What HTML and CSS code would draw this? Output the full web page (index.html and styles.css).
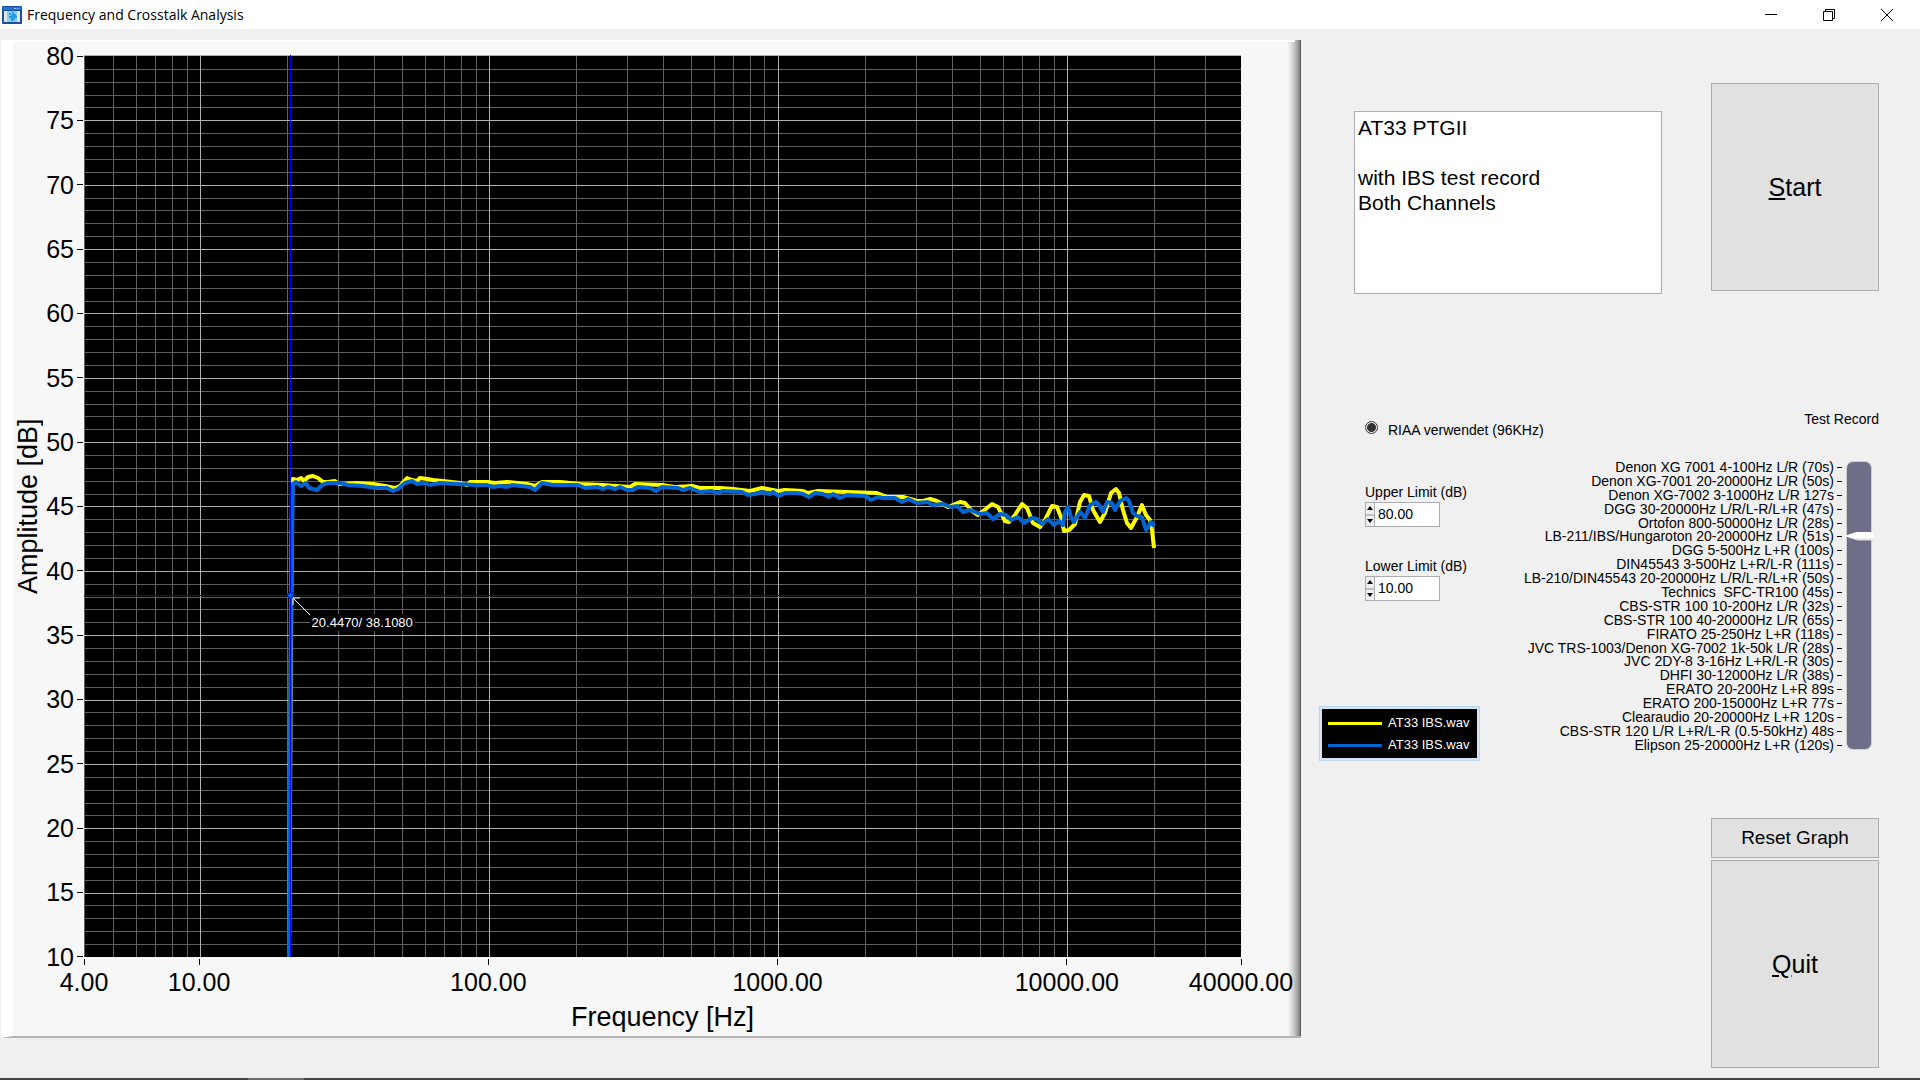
FILE: index.html
```html
<!DOCTYPE html>
<html lang="en">
<head>
<meta charset="utf-8">
<title>Frequency and Crosstalk Analysis</title>
<link rel="stylesheet" href="styles.css">
</head>
<body>
<header class="titlebar">
  <svg class="app-icon" viewBox="0 0 20 18" aria-hidden="true">
    <rect x="0" y="0" width="20" height="18" rx="1" fill="#1c4fa0"/>
    <rect x="1" y="1" width="18" height="3" fill="#2a6fd0"/>
    <rect x="12" y="2" width="2" height="1" fill="#9cc4f0"/>
    <rect x="15" y="2" width="1" height="1" fill="#9cc4f0"/>
    <rect x="17" y="2" width="1" height="1" fill="#e08060"/>
    <rect x="2" y="5" width="16" height="11" fill="#e4e4da"/>
    <rect x="5" y="5" width="10" height="11" fill="#7fd0f5"/>
    <path d="M7 7h2v2H7zM10 6h2v2h2v2h1v2h-2v2h-2v1H9v-3H7v-2h2V9h1z" fill="#2a9be0"/>
  </svg>
  <h1 class="title">Frequency and Crosstalk Analysis</h1>
  <div class="window-buttons">
    <button class="window-button" aria-label="Minimize"><svg width="12" height="12" viewBox="0 0 12 12"><path d="M0 5.5h12"/></svg></button>
    <button class="window-button" aria-label="Restore"><svg width="12" height="12" viewBox="0 0 12 12"><path d="M.5 2.5h9v9h-9zM2.500 2.500v-2h9v9h-2"/></svg></button>
    <button class="window-button" aria-label="Close"><svg width="12" height="12" viewBox="0 0 12 12"><path d="M0 0l12 12M12 0L0 12"/></svg></button>
  </div>
</header>

<main class="workspace">
  <section class="graph">
    <div class="y-title">Amplitude [dB]</div>
    <ol class="y-axis">
      <li>80</li><li>75</li><li>70</li><li>65</li><li>60</li><li>55</li><li>50</li><li>45</li><li>40</li><li>35</li><li>30</li><li>25</li><li>20</li><li>15</li><li>10</li>
    </ol>
    <div class="plot">
      <svg class="plot-area" viewBox="84 55 1157 902" preserveAspectRatio="none" role="img" aria-label="Amplitude over frequency">
        <path class="grid-minor" d="M84 69H1241M84 82H1241M84 95H1241M84 107H1241M84 133H1241M84 146H1241M84 159H1241M84 172H1241M84 198H1241M84 210H1241M84 223H1241M84 236H1241M84 262H1241M84 275H1241M84 288H1241M84 301H1241M84 326H1241M84 339H1241M84 352H1241M84 365H1241M84 391H1241M84 404H1241M84 416H1241M84 429H1241M84 455H1241M84 468H1241M84 481H1241M84 494H1241M84 519H1241M84 532H1241M84 545H1241M84 558H1241M84 584H1241M84 597H1241M84 609H1241M84 622H1241M84 648H1241M84 661H1241M84 674H1241M84 687H1241M84 712H1241M84 725H1241M84 738H1241M84 751H1241M84 777H1241M84 790H1241M84 803H1241M84 815H1241M84 841H1241M84 854H1241M84 867H1241M84 880H1241M84 905H1241M84 918H1241M84 931H1241M84 944H1241"/>
        <path class="grid-minor" d="M84 55V957M113 55V957M136 55V957M155 55V957M172 55V957M187 55V957M287 55V957M338 55V957M374 55V957M402 55V957M425 55V957M444 55V957M461 55V957M476 55V957M576 55V957M627 55V957M663 55V957M691 55V957M714 55V957M733 55V957M750 55V957M764 55V957M865 55V957M916 55V957M952 55V957M980 55V957M1003 55V957M1022 55V957M1039 55V957M1054 55V957M1154 55V957M1205 55V957"/>
        <path class="grid-major" d="M84 55H1241M84 120H1241M84 185H1241M84 249H1241M84 313H1241M84 378H1241M84 442H1241M84 506H1241M84 571H1241M84 635H1241M84 700H1241M84 764H1241M84 828H1241M84 893H1241M200 55V957M489 55V957M778 55V957M1067 55V957"/>
        <polyline class="trace trace-a" points="289,957 292,482 293,479 297,480 301,478 304,481 308,477 313,476 318,478 323,482 328,482 335,481 339,484 357,483 373,484 385,486 395,488 400,486 407,478 412,480 417,481 420,478 427,479 433,480 443,481 460,483 467,485 470,482 488,482 495,483 507,482 527,484 535,486 542,482 560,482 580,484 603,485 630,487 635,484 662,485 675,487 692,486 700,488 720,488 733,489 750,491 762,488 778,491 785,490 803,491 808,493 818,491 847,492 877,493 887,497 903,497 917,501 923,501 930,499 937,501 948,507 960,502 965,503 972,511 978,515 987,508 992,504 998,507 1005,521 1009,522 1015,515 1022,504 1027,508 1033,523 1040,527 1045,520 1052,506 1057,507 1061,517 1064,531 1069,530 1075,524 1080,502 1084,495 1089,496 1093,510 1100,522 1105,513 1111,493 1116,489 1119,493 1123,510 1127,523 1131,528 1137,517 1142,505 1146,515 1150,520 1152,530 1154,548"/>
        <polyline class="trace trace-b" points="289,957 291,596 293,484 296,482 301,486 306,483 309,488 317,490 322,485 328,483 340,483 348,485 363,486 377,488 387,488 393,491 398,489 405,483 412,481 417,484 425,483 430,485 440,483 457,484 477,485 487,485 492,487 500,486 507,487 512,485 530,487 535,490 542,483 553,485 578,485 585,488 597,487 603,489 608,487 615,489 620,487 627,490 633,490 638,487 650,488 656,491 662,487 678,488 683,490 690,488 700,492 712,491 717,493 723,491 742,492 748,495 755,494 762,492 770,494 773,492 779,496 785,493 797,493 803,494 809,497 815,493 823,494 829,497 833,494 840,498 847,495 865,496 871,500 878,497 883,498 895,498 902,502 908,499 917,503 928,502 932,505 943,504 951,507 957,506 963,512 970,510 980,514 987,513 993,519 1000,514 1006,515 1011,520 1018,517 1024,523 1032,518 1037,519 1042,524 1048,519 1054,525 1059,521 1063,525 1065,512 1068,507 1071,517 1074,522 1080,512 1085,518 1090,505 1096,502 1099,505 1103,512 1107,502 1112,503 1115,510 1120,501 1126,498 1129,501 1133,513 1137,516 1142,517 1146,530 1151,522 1154,526"/>
        <path class="cursor-line" d="M290 55V957M84 595H1241"/>
        <circle class="cursor-point" cx="290.500" cy="595.500" r="3"/>
        <path class="cursor-arrow" d="M310 615L293 598M293 605V598H300"/>
      </svg>
      <output class="cursor-label">20.4470/ 38.1080</output>
    </div>
    <div class="x-side">
      <ol class="x-axis">
        <li>4.00</li><li>10.00</li><li>100.00</li><li>1000.00</li><li>10000.00</li><li>40000.00</li>
      </ol>
      <div class="x-title">Frequency [Hz]</div>
    </div>
  </section>

  <section class="controls">
    <div class="top-row">
      <textarea class="notes" aria-label="Notes" spellcheck="false">AT33 PTGII

with IBS test record
Both Channels</textarea>
      <button class="push tall"><span><u>S</u>tart</span></button>
    </div>

    <div class="middle-row">
      <div class="settings">
        <label class="riaa"><input type="radio" checked>RIAA verwendet (96KHz)</label>
        <div class="field">
          <label for="upper">Upper Limit (dB)</label>
          <div class="spin-box">
            <div class="spinner">
              <button class="step up" aria-label="Raise upper limit"></button>
              <button class="step down" aria-label="Reduce upper limit"></button>
            </div>
            <input id="upper" type="text" value="80.00">
          </div>
        </div>
        <div class="field">
          <label for="lower">Lower Limit (dB)</label>
          <div class="spin-box">
            <div class="spinner">
              <button class="step up" aria-label="Raise lower limit"></button>
              <button class="step down" aria-label="Reduce lower limit"></button>
            </div>
            <input id="lower" type="text" value="10.00">
          </div>
        </div>
        <ul class="legend">
          <li class="series-a">AT33 IBS.wav</li>
          <li class="series-b">AT33 IBS.wav</li>
        </ul>
      </div>

      <div class="record">
        <label class="record-title" for="record">Test Record</label>
        <div class="record-body">
          <ol class="record-list">
            <li>Denon XG 7001 4-100Hz L/R (70s)</li>
            <li>Denon XG-7001 20-20000Hz L/R (50s)</li>
            <li>Denon XG-7002 3-1000Hz L/R 127s</li>
            <li>DGG 30-20000Hz L/R/L-R/L+R (47s)</li>
            <li>Ortofon 800-50000Hz L/R (28s)</li>
            <li>LB-211/IBS/Hungaroton 20-20000Hz L/R (51s)</li>
            <li>DGG 5-500Hz L+R (100s)</li>
            <li>DIN45543 3-500Hz L+R/L-R (111s)</li>
            <li>LB-210/DIN45543 20-20000Hz L/R/L-R/L+R (50s)</li>
            <li>Technics&nbsp; SFC-TR100 (45s)</li>
            <li>CBS-STR 100 10-200Hz L/R (32s)</li>
            <li>CBS-STR 100 40-20000Hz L/R (65s)</li>
            <li>FIRATO 25-250Hz L+R (118s)</li>
            <li>JVC TRS-1003/Denon XG-7002 1k-50k L/R (28s)</li>
            <li>JVC 2DY-8 3-16Hz L+R/L-R (30s)</li>
            <li>DHFI 30-12000Hz L/R (38s)</li>
            <li>ERATO 20-200Hz L+R 89s</li>
            <li>ERATO 200-15000Hz L+R 77s</li>
            <li>Clearaudio 20-20000Hz L+R 120s</li>
            <li>CBS-STR 120 L/R L+R/L-R (0.5-50kHz) 48s</li>
            <li>Elipson 25-20000Hz L+R (120s)</li>
          </ol>
          <input class="record-slider" id="record" type="range" min="0" max="20" value="5">
        </div>
      </div>
    </div>

    <div class="bottom-row">
      <button class="push short">Reset Graph</button>
      <button class="push tall"><span><u>Q</u>uit</span></button>
    </div>
  </section>
</main>
<footer class="taskbar-edge"></footer>
</body>
</html>
```
FILE: styles.css
```css
* { box-sizing: border-box; }

body {
  margin: 0;
  min-height: 100vh;
  display: grid;
  grid-template-rows: 29px 1fr 2px;
  background: #f0f0f0;
  color: #000;
  font: 14px/17px "Liberation Sans", Arial, sans-serif;
}

ol, ul { margin: 0; padding: 0; list-style: none; }
button, input, textarea { font: inherit; color: inherit; margin: 0; border-radius: 0; }

/* Title bar */
.titlebar { display: flex; align-items: center; background: #fff; padding: 0 4px 0 2px; }
.app-icon { width: 20px; height: 18px; }
.title { margin: 0 auto 0 5px; font: 14px/20px "Open Sans", "Noto Sans", sans-serif; }
.window-buttons { display: flex; height: 100%; }
.window-button {
  width: 58px;
  padding: 0;
  border: 0;
  background: none;
  display: grid;
  place-items: center;
}
.window-button svg { fill: none; stroke: #000; }

/* Main split */
.workspace { display: grid; grid-template-columns: minmax(0, 1fr) 619px; }

/* Graph panel */
.graph {
  margin: 11px 0 40px 1px;
  padding: 15px 60px 0 0;
  border: solid #fff;
  border-width: 0 0 2px 12px;
  border-bottom-color: #b4b4b4;
  background:
    linear-gradient(#fff, #fff) 0 0 / calc(100% - 6px) 2px no-repeat,
    linear-gradient(to left, #505050, #909090 2px, #c8c8c8 7px, #f7f7f7 13px);
  display: grid;
  grid-template: 1fr 79px / 32px 39px minmax(0, 1fr);
  font-size: 25px;
  line-height: 30px;
}
.y-title { writing-mode: vertical-rl; transform: rotate(180deg); text-align: center; font-size: 27px; }
.y-axis {
  margin: -14px 0 -15px;
  display: flex;
  flex-direction: column;
  justify-content: space-between;
}
.y-axis li { display: flex; align-items: center; justify-content: flex-end; gap: 3px; }
.y-axis li::after { content: ""; width: 6px; height: 1px; margin-right: 1px; background: #000; }

.plot { position: relative; background: #000; min-height: 0; }
.plot-area { position: absolute; width: 100%; height: 100%; }
.plot-area path, .plot-area polyline { fill: none; vector-effect: non-scaling-stroke; }
.grid-minor { stroke: #606060; shape-rendering: crispEdges; }
.grid-major { stroke: #b0b0b0; shape-rendering: crispEdges; }
.trace { stroke-width: 4px; stroke-linejoin: round; }
.trace-a { stroke: #ff0; }
.trace-b { stroke: #0064d2; }
.cursor-line { stroke: #00f; shape-rendering: crispEdges; }
.cursor-point { fill: #0064d2; stroke: #00f; }
.cursor-arrow { stroke: #fff; }
.cursor-label {
  position: absolute;
  left: 19.5%;
  top: 62%;
  padding: 0 2px;
  background: #000;
  color: #fff;
  font-size: 13px;
  line-height: 17px;
}

.x-side { grid-column: 3; padding-top: 2px; }
.x-axis { display: grid; grid-template-columns: 115fr 289fr 289fr 289fr 174fr 0; }
.x-axis li { width: 0; display: flex; flex-direction: column; align-items: center; }
.x-axis li::before { content: ""; flex: none; width: 1px; height: 6px; margin-bottom: 2px; background: #000; }
.x-title { margin-top: 5px; text-align: center; font-size: 27px; }

/* Controls */
.controls {
  padding: 54px 41px 10px 18px;
  display: flex;
  flex-direction: column;
}
.top-row { display: flex; justify-content: space-between; padding-left: 35px; }
.notes {
  width: 308px;
  height: 183px;
  margin-top: 28px;
  padding: 3px;
  border: 1px solid #abadb3;
  background: #fff;
  resize: none;
  overflow: hidden;
  font-size: 21px;
  line-height: 25px;
}
.push { width: 168px; padding: 0; border: 1px solid #adadad; background: #e1e1e1; }
.push.tall { height: 208px; font-size: 25px; line-height: 30px; }
.push.short { height: 40px; font-size: 19px; line-height: 24px; }

.middle-row { display: flex; justify-content: space-between; margin-top: 117px; }
.settings { width: 161px; padding-top: 10px; white-space: nowrap; }
.riaa { display: flex; gap: 10px; margin-left: 46px; line-height: 18px; }
.riaa input {
  appearance: none;
  flex: none;
  width: 13px;
  height: 13px;
  border: 1px solid #333;
  border-radius: 50%;
  background: radial-gradient(circle, #333 4px, #f0f0f0 5px);
}
.field { margin: 45px 0 0 46px; }
.field + .field { margin-top: 31px; }
.field label { display: block; }
.spin-box {
  width: 75px;
  height: 25px;
  margin-top: 1px;
  border: 1px solid #abadb3;
  background: #fff;
  display: flex;
}
.spinner { width: 9px; border-right: 1px solid #abadb3; display: grid; gap: 2px; background: #c0c0c0; }
.step { padding: 0; border: 0; background: #f0f0f0; display: grid; place-items: center; }
.step::before { content: ""; border: solid transparent; border-width: 0 3px; }
.step.up::before { border-bottom: 4px solid #000; }
.step.down::before { border-top: 4px solid #000; }
.spin-box input { flex: 1; min-width: 0; padding: 0 3px; border: 0; background: none; }

.legend {
  height: 55px;
  margin-top: 105px;
  padding: 5px 8px;
  border: 1px solid #b8d6f0;
  outline: 2px solid #d4e4f2;
  outline-offset: -3px;
  background: #000;
  color: #fff;
  font-size: 13px;
  line-height: 22px;
}
.legend li { display: flex; align-items: center; gap: 6px; }
.legend li::before { content: ""; flex: none; width: 54px; height: 3px; }
.series-a::before { background: #ff0; }
.series-b::before { background: #0064d2; }

.record { display: flex; flex-direction: column; }
.record-title { text-align: right; }
.record-body { display: flex; gap: 5px; margin: 33px 8px 0 0; }
.record-list {
  height: 291px;
  display: flex;
  flex-direction: column;
  justify-content: space-between;
  line-height: 13px;
}
.record-list li { display: flex; align-items: center; justify-content: flex-end; gap: 3px; }
.record-list li::after { content: ""; width: 5px; height: 1px; background: #000; }
.record-slider {
  appearance: none;
  writing-mode: vertical-lr;
  width: 24px;
  height: 287px;
  margin-top: 1px;
  border-radius: 6px;
  background: #6e6e89;
  box-shadow: 0 0 0 1px #d0d0d0;
}
.record-slider::-webkit-slider-thumb {
  appearance: none;
  width: 29px;
  height: 9px;
  background: linear-gradient(#fff 60%, #d0d0d0);
  clip-path: polygon(0 50%, 45% 0, 100% 0, 100% 100%, 45% 100%);
}

.bottom-row {
  margin-top: auto;
  display: flex;
  flex-direction: column;
  align-items: flex-end;
  gap: 2px;
}

.taskbar-edge { background: linear-gradient(to right, #444 248px, #6b6b6b 248px, #6b6b6b 304px, #444 304px); }
```
